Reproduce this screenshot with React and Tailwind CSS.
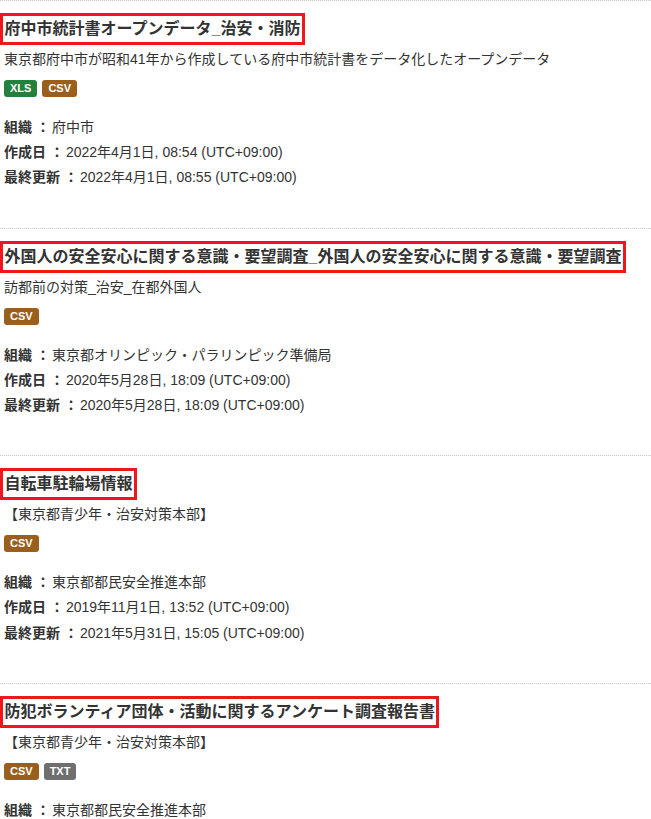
import React from 'react';

const datasets = [
    {
        title: '府中市統計書オープンデータ_治安・消防',
        description: '東京都府中市が昭和41年から作成している府中市統計書をデータ化したオープンデータ',
        formats: ['XLS', 'CSV'],
        org: '府中市',
        created: '2022年4月1日, 08:54 (UTC+09:00)',
        updated: '2022年4月1日, 08:55 (UTC+09:00)',
    },
    {
        title: '外国人の安全安心に関する意識・要望調査_外国人の安全安心に関する意識・要望調査',
        description: '訪都前の対策_治安_在都外国人',
        formats: ['CSV'],
        org: '東京都オリンピック・パラリンピック準備局',
        created: '2020年5月28日, 18:09 (UTC+09:00)',
        updated: '2020年5月28日, 18:09 (UTC+09:00)',
    },
    {
        title: '自転車駐輪場情報',
        description: '【東京都青少年・治安対策本部】',
        formats: ['CSV'],
        org: '東京都都民安全推進本部',
        created: '2019年11月1日, 13:52 (UTC+09:00)',
        updated: '2021年5月31日, 15:05 (UTC+09:00)',
    },
    {
        title: '防犯ボランティア団体・活動に関するアンケート調査報告書',
        description: '【東京都青少年・治安対策本部】',
        formats: ['CSV', 'TXT'],
        org: '東京都都民安全推進本部',
        created: '2019年11月1日, 13:52 (UTC+09:00)',
        updated: '2021年5月31日, 15:05 (UTC+09:00)',
    },
];

const badgeColors = {
    XLS: 'bg-[#23803d]',
    CSV: 'bg-[#9b5f1d]',
    TXT: 'bg-[#6f6f6f]',
};

const MetaRow = ({ label, value }) => (
    <div className="leading-[25.2px]">
        <span className="font-bold">{label} ：</span>
        <span className="ml-[2px]">{value}</span>
    </div>
);

const DatasetItem = ({ item }) => (
    <li className="border-t border-dotted border-[#c8c8c8] pt-3 pb-[37px]">
        <h3 className="inline-block border-[3px] border-[#f0161d] px-[1.5px] text-[16px] leading-[26px] font-bold text-[#333]">
            {item.title}
        </h3>
        <div className="pl-1 mt-1 text-[14px] leading-[20px] text-[#333]">{item.description}</div>
        <div className="pl-1 mt-[11px] flex gap-[5px]">
            {item.formats.map((f) => (
                <span
                    key={f}
                    className={`${badgeColors[f]} text-white text-[11px] font-bold leading-[17px] h-[17px] px-[6px] rounded-[3px]`}
                >
                    {f}
                </span>
            ))}
        </div>
        <div className="pl-1 mt-[18px] text-[14px] text-[#333]">
            <MetaRow label="組織" value={item.org} />
            <MetaRow label="作成日" value={item.created} />
            <MetaRow label="最終更新" value={item.updated} />
        </div>
    </li>
);

const App = () => {
    return (
        <div
            className="min-h-screen bg-white overflow-hidden"
            style={{ fontFamily: '"Liberation Sans", "Noto Sans CJK JP", sans-serif' }}
        >
            <ul className="w-[651px]">
                {datasets.map((item) => (
                    <DatasetItem key={item.title} item={item} />
                ))}
            </ul>
        </div>
    );
};

export default App;
